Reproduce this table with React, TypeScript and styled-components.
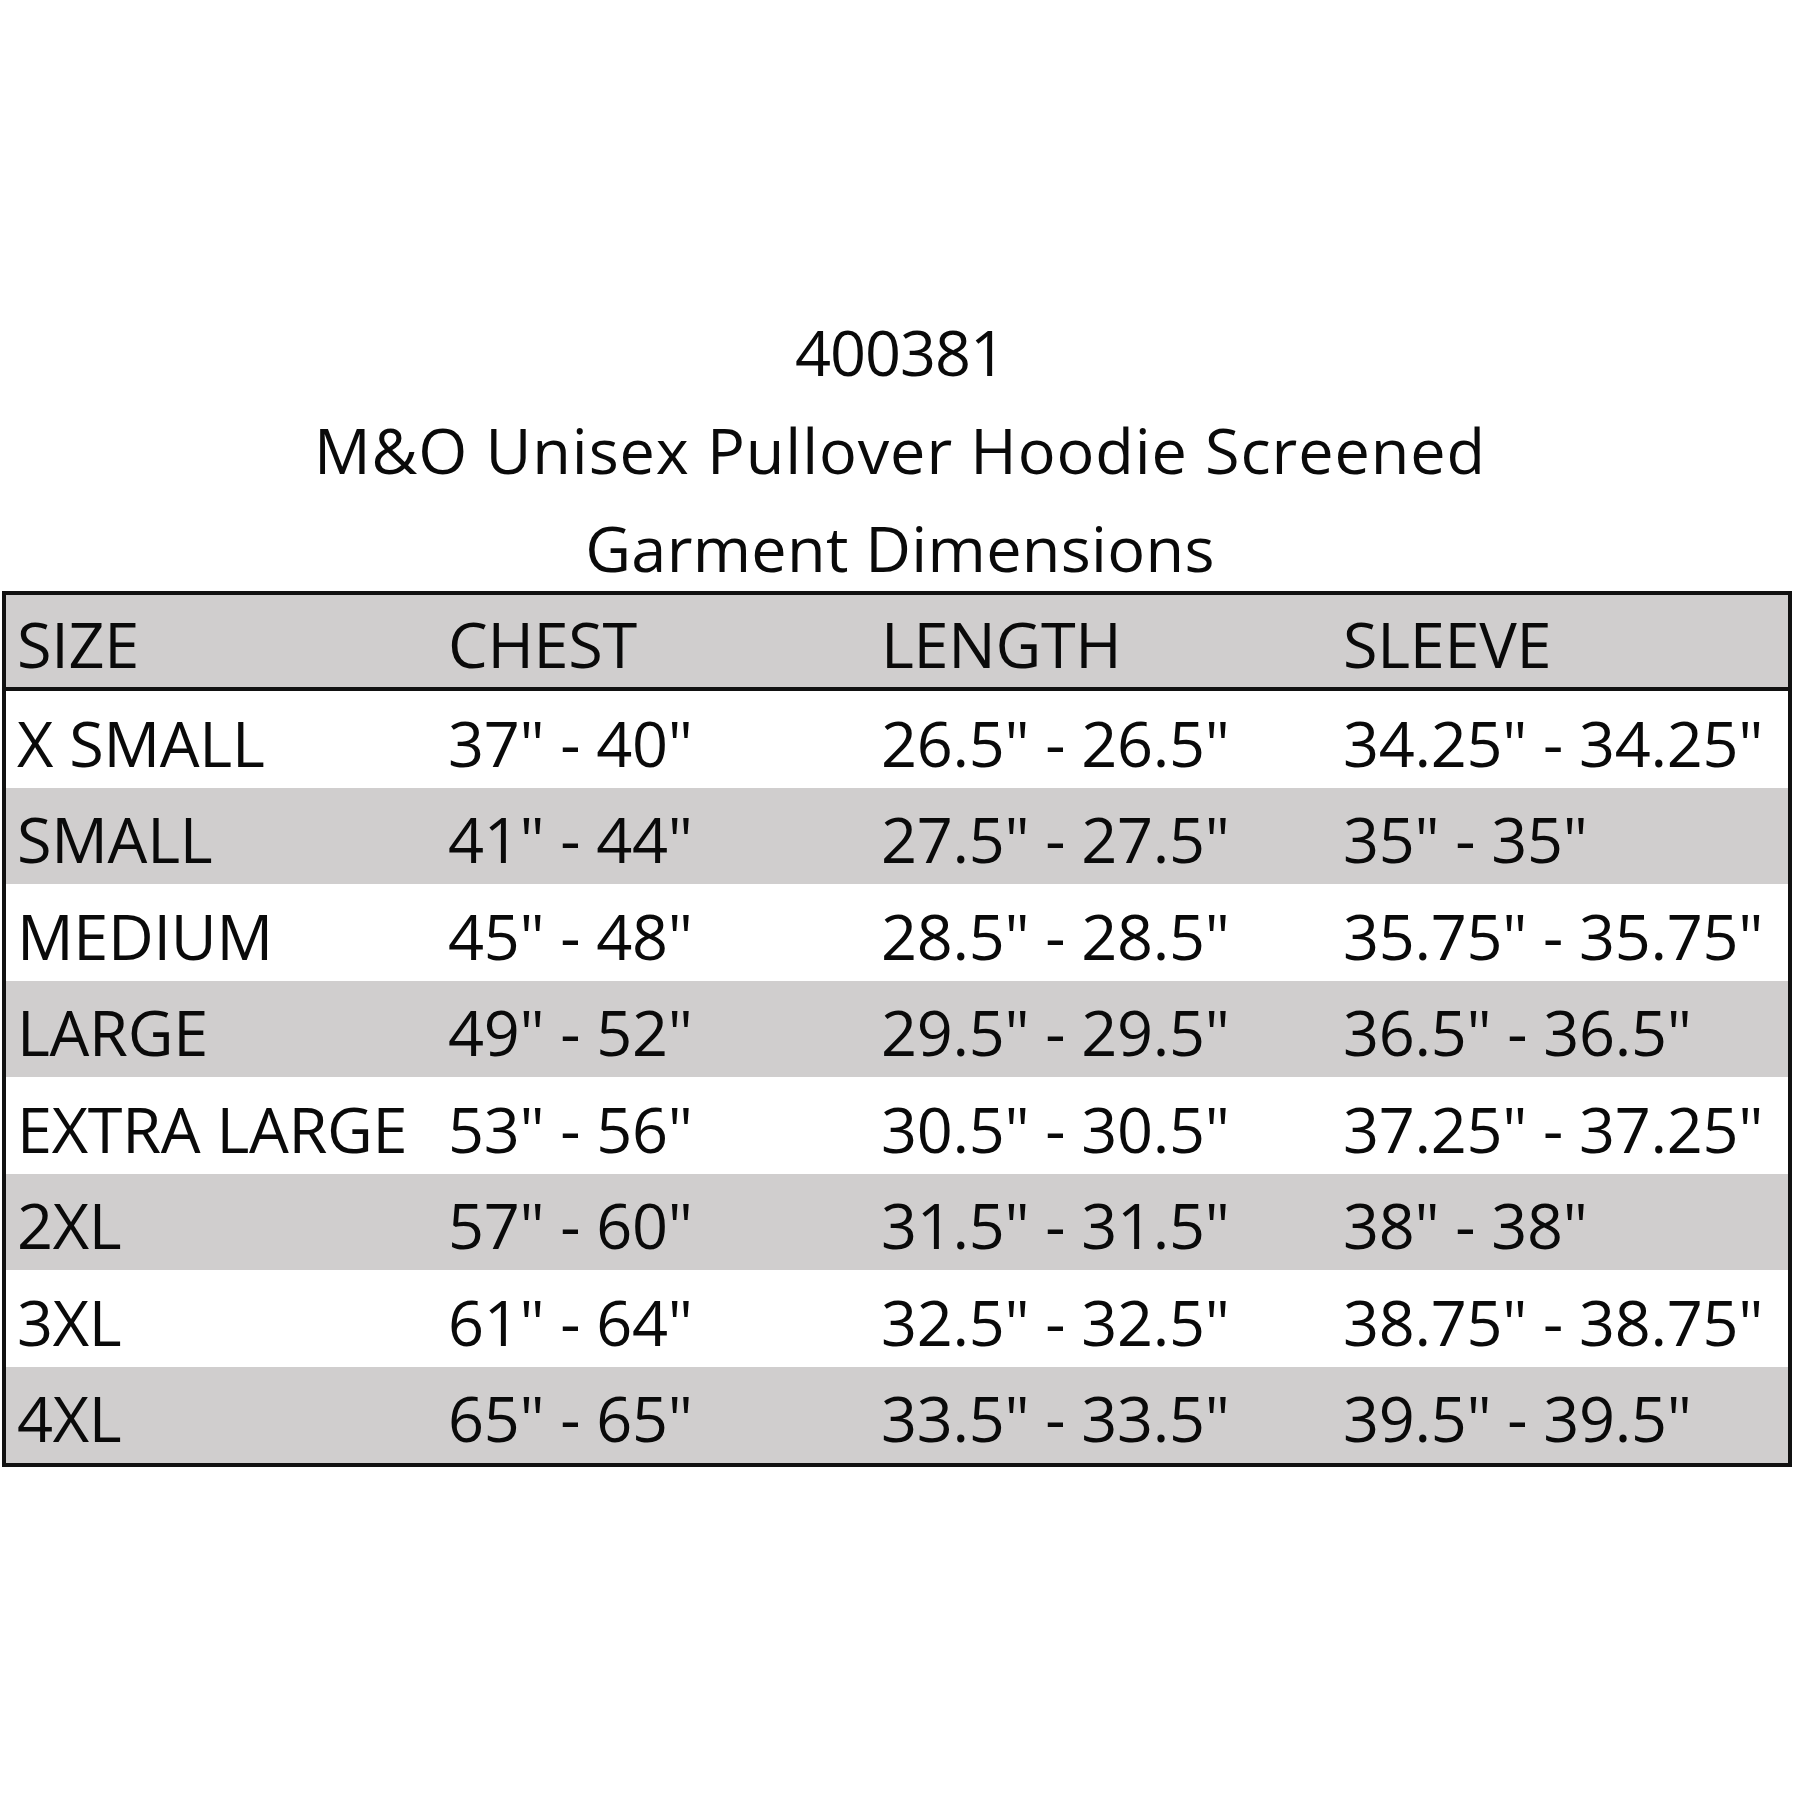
import styled, { createGlobalStyle } from "styled-components";

const GlobalStyle = createGlobalStyle`
  html, body {
    margin: 0;
    padding: 0;
    background: #ffffff;
  }
  body {
    font-family: "Open Sans", "Liberation Sans", sans-serif;
    color: #0a0a0a;
  }
`;

const StyledPage = styled.div`
  width: 1800px;
  min-height: 1800px;
  box-sizing: border-box;
  padding-top: 320px;
  background: #ffffff;
`;

const StyledTitleBlock = styled.div`
  display: flex;
  flex-direction: column;
  align-items: center;
  gap: 34px;
`;

const StyledTitleLine = styled.div<{ $tracking?: number }>`
  font-size: 63px;
  line-height: 64px;
  white-space: nowrap;
  letter-spacing: ${({ $tracking = 0 }) => `${$tracking}px`};
`;

const StyledTable = styled.div`
  margin: 11px 0 0 2px;
  width: 1790px;
  box-sizing: border-box;
  border: 4px solid #111111;
`;

const StyledRow = styled.div<{ $shaded?: boolean; $header?: boolean }>`
  display: grid;
  grid-template-columns: 431px 433px 462px 1fr;
  align-items: end;
  box-sizing: border-box;
  height: ${({ $header }) => ($header ? "96px" : "96.5px")};
  padding-bottom: ${({ $header }) => ($header ? "12px" : "14px")};
  background: ${({ $shaded }) => ($shaded ? "#d0cece" : "#ffffff")};
  border-bottom: ${({ $header }) => ($header ? "4px solid #111111" : "none")};
`;

const StyledCell = styled.div`
  padding-left: 11px;
  font-size: 63px;
  line-height: 63px;
  white-space: nowrap;
  letter-spacing: -0.3px;
`;

const columns = ["SIZE", "CHEST", "LENGTH", "SLEEVE"];

const sizes = [
  ["X SMALL", `37" - 40"`, `26.5" - 26.5"`, `34.25" - 34.25"`],
  ["SMALL", `41" - 44"`, `27.5" - 27.5"`, `35" - 35"`],
  ["MEDIUM", `45" - 48"`, `28.5" - 28.5"`, `35.75" - 35.75"`],
  ["LARGE", `49" - 52"`, `29.5" - 29.5"`, `36.5" - 36.5"`],
  ["EXTRA LARGE", `53" - 56"`, `30.5" - 30.5"`, `37.25" - 37.25"`],
  ["2XL", `57" - 60"`, `31.5" - 31.5"`, `38" - 38"`],
  ["3XL", `61" - 64"`, `32.5" - 32.5"`, `38.75" - 38.75"`],
  ["4XL", `65" - 65"`, `33.5" - 33.5"`, `39.5" - 39.5"`],
];

export default function App() {
  return (
    <>
      <GlobalStyle />
      <StyledPage>
        <StyledTitleBlock>
          <StyledTitleLine $tracking={-1}>400381</StyledTitleLine>
          <StyledTitleLine $tracking={0.9}>M&amp;O Unisex Pullover Hoodie Screened</StyledTitleLine>
          <StyledTitleLine $tracking={0.3}>Garment Dimensions</StyledTitleLine>
        </StyledTitleBlock>

        <StyledTable>
          <StyledRow $header $shaded>
            {columns.map((c) => (
              <StyledCell key={c}>{c}</StyledCell>
            ))}
          </StyledRow>
          {sizes.map((row, i) => (
            <StyledRow key={row[0]} $shaded={i % 2 === 1}>
              {row.map((v, j) => (
                <StyledCell key={j}>{v}</StyledCell>
              ))}
            </StyledRow>
          ))}
        </StyledTable>
      </StyledPage>
    </>
  );
}
